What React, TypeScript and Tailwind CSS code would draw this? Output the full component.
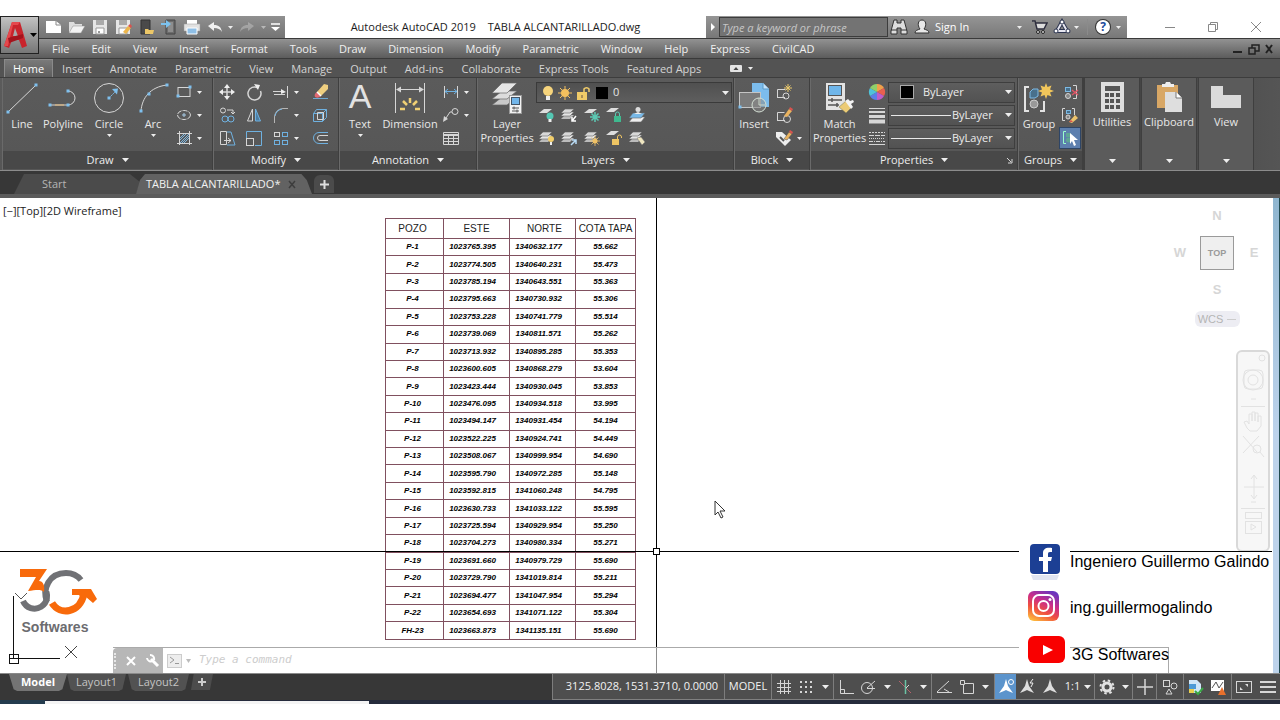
import { useState } from 'react'
import type { ReactNode } from 'react'
import clsx from 'clsx'

interface IconProps {
  w?: number
  h?: number
  children: ReactNode
}

const Icon = ({ w = 18, h = 18, children }: IconProps) => (
  <svg
    width={w}
    height={h}
    viewBox={`0 0 ${w} ${h}`}
    fill="none"
    stroke="#d6d6d6"
    strokeWidth="1"
    className="shrink-0"
    aria-hidden="true"
  >
    {children}
  </svg>
)

const Caret = ({ small = false, className = '' }: { small?: boolean; className?: string }) => (
  <svg
    width={small ? 5 : 7}
    height={small ? 3 : 4}
    viewBox="0 0 8 4"
    preserveAspectRatio="none"
    className={clsx('shrink-0', className)}
    aria-hidden="true"
  >
    <path d="M0 0h8L4 4z" fill="#eee" />
  </svg>
)

/* ---------- quick access icons ---------- */

const Sheets = ({ y = 0 }: { y?: number }) => (
  <g stroke="none" transform={`translate(0 ${y})`}>
    <path d="M5 9h9l-4 4H1z" fill="#bbb" />
    <path d="M5 6h9l-4 4H1z" fill="#e4e4e4" stroke="#666" strokeWidth=".6" />
    <path d="M5 3h9l-4 4H1z" fill="#d8d8d8" stroke="#666" strokeWidth=".6" />
  </g>
)

const quickIcons = [
  {
    label: 'New',
    icon: (
      <Icon>
        <path d="M1 3h10l5 4v8H1z" fill="#fff" stroke="none" />
        <path d="M11 3v4h5" stroke="#888" />
      </Icon>
    ),
  },
  {
    label: 'Open',
    icon: (
      <Icon>
        <path d="M1 15V4h5l1 2h7v2" fill="#ddd" stroke="none" />
        <path d="M1 15L5 8h12l-4 7z" fill="#f3f3f3" stroke="#888" strokeWidth=".5" />
      </Icon>
    ),
  },
  {
    label: 'Save',
    icon: (
      <Icon>
        <path d="M2 2h14v14H2z" fill="#e6e6e6" stroke="none" />
        <path d="M5 2h8v5H5z" fill="#aaa" stroke="none" />
        <path d="M5 10h8v6H5z" fill="#fff" stroke="#999" />
        <path d="M7 14h2" stroke="#333" />
      </Icon>
    ),
  },
  {
    label: 'Save As',
    icon: (
      <Icon>
        <path d="M2 2h14v14H2z" fill="#e6e6e6" stroke="none" />
        <path d="M5 2h8v5H5z" fill="#aaa" stroke="none" />
        <path d="M5 10h8v6H5z" fill="#fff" stroke="#999" />
        <path d="M9 14l5-6 3 2-5 6z" fill="#edb64c" stroke="none" />
        <path d="M14 8l2-2 2 2-1 2z" fill="#d9534f" stroke="none" />
      </Icon>
    ),
  },
  {
    label: 'Open from Web & Mobile',
    icon: (
      <Icon>
        <path d="M4 2h9v14H4z" fill="#4a4a4a" stroke="#333" />
        <path d="M8 16v-5h3l1 1h5l-1 4z" fill="#ecc767" stroke="none" />
      </Icon>
    ),
  },
  {
    label: 'Save to Web & Mobile',
    icon: (
      <Icon>
        <path d="M6 2h9v14H6z" fill="#6d6d6d" stroke="#444" />
        <path d="M8 4h5v10H8z" fill="#8d8d8d" stroke="none" />
        <path d="M1 5h5V2l5 4-5 4V7H1z" fill="#7cc2ee" stroke="none" />
      </Icon>
    ),
  },
  {
    label: 'Plot',
    icon: (
      <Icon>
        <path d="M4 2h10v4H4z" fill="#fff" stroke="none" />
        <path d="M1 6h16v7H1z" fill="#e2e2e2" stroke="#999" strokeWidth=".5" />
        <path d="M4 10h10v6H4z" fill="#8fbfe6" stroke="#fff" />
      </Icon>
    ),
  },
  {
    label: 'Undo',
    icon: (
      <Icon>
        <path d="M2 8l6-4v3c5 0 7 2 8 7-2-3-4-4-8-4v3z" fill="#f0f0f0" stroke="none" />
      </Icon>
    ),
  },
]

/* ---------- ribbon icons ---------- */

const Grip = ({ x, y }: { x: number; y: number }) => (
  <rect x={x - 1.5} y={y - 1.5} width="3" height="3" fill="#7fc0ee" stroke="none" />
)

const lineIcon = (
  <Icon w={32} h={32}>
    <path d="M2 30L30 3" />
    <Grip x={2} y={30} />
    <Grip x={30} y={3} />
  </Icon>
)

const polylineIcon = (
  <Icon w={32} h={32}>
    <path d="M3 23h18a7 7 0 0 0 0-14" />
    <path d="M8 23h9" stroke="#e6b877" />
    <Grip x={3} y={23} />
    <Grip x={21} y={23} />
    <Grip x={21} y={9} />
  </Icon>
)

const circleIcon = (
  <Icon w={32} h={32}>
    <circle cx="16" cy="16" r="14.5" />
    <path d="M16 16l7-7" stroke="#7fc0ee" strokeDasharray="2 1" />
    <path d="M19 7l6-0.500-1 6z" fill="#7fc0ee" stroke="none" />
    <Grip x={16} y={16} />
  </Icon>
)

const arcIcon = (
  <Icon w={32} h={32}>
    <path d="M4 29C5 16 13 5 30 3" />
    <Grip x={4} y={29} />
    <Grip x={12} y={12} />
    <Grip x={30} y={3} />
  </Icon>
)

const textIcon = (
  <span className="flex h-8 w-8 items-start justify-center font-['Liberation_Sans',Arial,sans-serif] text-[34px] leading-[28px] text-[#e2e2e2]">
    A
  </span>
)

const dimensionIcon = (
  <Icon w={32} h={32}>
    <path d="M1.500 1v30M30.500 1v30M3 7.500h26" />
    <path d="M2 7.500l5-3v6zM30 7.500l-5-3v6z" fill="#d6d6d6" stroke="none" />
    <path d="M6 27h5M21 27h5M9 19l4 4M16 16v5M23 19l-4 4" stroke="#efcf74" strokeWidth="2.500" />
  </Icon>
)

const layerPropsIcon = (
  <Icon w={32} h={32}>
    <g stroke="#666" strokeWidth=".7">
      <path d="M11 15h15L16 23H1z" fill="#c9c9c9" />
      <path d="M11 9h15L16 17H1z" fill="#dcdcdc" />
      <path d="M11 1h15L16 11H1z" fill="#e6e6e6" />
    </g>
    <rect x="18.500" y="13.500" width="12" height="18" fill="#f2f2f2" stroke="#999" />
    <rect x="20.500" y="15.500" width="8" height="7" fill="#72b6ea" stroke="#456" />
    <path d="M21 26h7M21 29h7" stroke="#555" />
    <path d="M23 24.500v3M26 27.500v3" stroke="#555" />
  </Icon>
)

const insertIcon = (
  <Icon w={32} h={32}>
    <path d="M14 1h11l6 6v18H14z" fill="#7cbcec" stroke="none" />
    <path d="M25 1v6h6" fill="#c3e2fa" stroke="#5b9bc9" />
    <rect x="1.500" y="10.500" width="21" height="15" fill="#7b7b7b" stroke="#c4c4c4" />
    <circle cx="21" cy="23" r="7" fill="#88888888" stroke="#d5e0d5" />
    <path d="M21 23v-7M21 23h6" stroke="#c9d6c9" />
    <Grip x={2} y={25} />
  </Icon>
)

const matchIcon = (
  <Icon w={32} h={32}>
    <rect x="2" y="1" width="19" height="27" fill="#e3e3e3" stroke="none" />
    <rect x="4.500" y="3.500" width="13" height="10" fill="#6fb6ea" stroke="#555" />
    <path d="M4 18h14M4 23h11M8 16v4M13 21v4" stroke="#555" strokeWidth="1.500" />
    <path d="M15 25l7-6 6 6-6 6z" fill="#eccb76" stroke="#775" strokeWidth=".5" />
    <path d="M21 19l3-2 2 2 3-1 1 2-3 2 2 3-2 2z" fill="#f3f3f3" stroke="none" />
  </Icon>
)

const groupIcon = (
  <Icon w={32} h={32}>
    <path d="M6 5H2v24h4M17 29h4V19" stroke="#e3e3e3" strokeWidth="2" />
    <path d="M7 16v-6l3-3h5v7l-3 2z" fill="#48708c" stroke="#7cb9e4" />
    <circle cx="11" cy="22" r="4" fill="#999" stroke="#ccc" />
    <path
      d="M23 1l1.500 4 4-1.500-1.500 4 4 1.500-4 1.500 1.500 4-4-1.500-1.500 4-1.500-4-4 1.500 1.500-4-4-1.500 4-1.500-1.500-4 4 1.500z"
      fill="#f1c65b"
      stroke="none"
    />
  </Icon>
)

const utilitiesIcon = (
  <Icon w={32} h={32}>
    <rect x="5" y="1" width="23" height="30" fill="#dedede" stroke="none" />
    <rect x="9" y="5" width="15" height="5" fill="#555" stroke="none" />
    <g fill="#555" stroke="none">
      {[12, 18, 24].map((y) =>
        [9, 14, 20].map((x) => <rect key={`${x}-${y}`} x={x} y={y} width="4" height="4" />),
      )}
    </g>
  </Icon>
)

const clipboardIcon = (
  <Icon w={32} h={32}>
    <rect x="4" y="4" width="21" height="23" fill="#d8a765" stroke="none" />
    <path d="M9 6V3h3l1-2h4l1 2h3v3z" fill="#eee" stroke="none" />
    <path d="M12 11h11l6 6v14H12z" fill="#dedede" stroke="none" />
    <path d="M23 11v6h6" fill="#fff" stroke="#777" />
  </Icon>
)

const viewIcon = (
  <Icon w={32} h={32}>
    <path d="M1 5h12v9h18v13H1z" fill="#dadada" stroke="none" />
  </Icon>
)

interface Tool {
  label: string
  icon: ReactNode
  caret?: boolean
}

const drawTools: Tool[] = [
  {
    label: 'Rectangle',
    caret: true,
    icon: (
      <Icon>
        <rect x="3" y="4.500" width="12" height="9" />
        <Grip x={3} y={13} />
        <Grip x={15} y={4} />
      </Icon>
    ),
  },
  {
    label: 'Ellipse',
    caret: true,
    icon: (
      <Icon>
        <ellipse cx="9" cy="9" rx="6.500" ry="4.500" strokeDasharray="5 1" />
        <path d="M7 9h4M9 7v4" stroke="#a8cbe6" />
      </Icon>
    ),
  },
  {
    label: 'Hatch',
    caret: true,
    icon: (
      <Icon>
        <path d="M4.500 2v14M14.500 2v14M2 4.500h15M2 14.500h15" />
        <path d="M5 9l4-4M5 14l9-9M9 14l5-5M5 11l6-6M7 14l7-7" stroke="#7fb6de" />
      </Icon>
    ),
  },
]

const modifyTools: Tool[] = [
  {
    label: 'Move',
    icon: (
      <Icon>
        <path d="M9 3v12M3 9h12" strokeWidth="1.500" />
        <path d="M9 1l3 4H6zM9 17l3-4H6zM1 9l4-3v6zM17 9l-4-3v6z" fill="#eee" stroke="none" />
      </Icon>
    ),
  },
  {
    label: 'Rotate',
    icon: (
      <Icon>
        <path d="M13 5a6.500 6.500 0 1 0 2.500 3" strokeWidth="1.500" />
        <path d="M9 1l6 1-2 5z" fill="#eee" stroke="none" />
      </Icon>
    ),
  },
  {
    label: 'Trim',
    caret: true,
    icon: (
      <Icon>
        <path d="M15.500 3v12M1 8.500h10M2 11.500h11" />
        <path d="M9 6l5 3-5 2z" fill="#eee" stroke="none" />
      </Icon>
    ),
  },
  {
    label: 'Erase',
    icon: (
      <Icon>
        <path d="M2 15.500h15" stroke="#6fa9d3" />
        <path d="M6 9L13 1l4 1v4l-7 7z" fill="#efcf80" stroke="none" />
        <path d="M6 9l4 4c-2 2-4 2-6 1-1-2 0-4 2-5z" fill="#e06a72" stroke="none" />
        <path d="M6 9l4 4" stroke="#fff" strokeWidth="1.500" />
      </Icon>
    ),
  },
  {
    label: 'Copy',
    icon: (
      <Icon>
        <circle cx="5" cy="4.500" r="2.500" />
        <path d="M9 4h6v4M13 6l2 2 2-2" />
        <circle cx="7" cy="13" r="3" stroke="#6fb1e0" />
        <circle cx="13" cy="13" r="3" stroke="#6fb1e0" />
      </Icon>
    ),
  },
  {
    label: 'Mirror',
    icon: (
      <Icon>
        <path d="M7.500 3v12h-5z" />
        <path d="M10.500 3v12h5z" stroke="#6fb1e0" fill="#4d7ea3" />
      </Icon>
    ),
  },
  {
    label: 'Fillet',
    caret: true,
    icon: (
      <Icon>
        <path d="M2.500 17v-6C3 6 6 3 11 2.500h5" stroke="#b5b5b5" />
        <path d="M3 10C4 6 6 4 10 3" stroke="#7cb9e4" />
      </Icon>
    ),
  },
  {
    label: 'Explode',
    icon: (
      <Icon>
        <path d="M2.500 7.500h9v8h-9zM2.500 7.500l3-4h10v8l-4 4M11.500 7.500l4-4" stroke="#6fb1e0" />
        <path d="M6.500 6.500h6v7h-6z" />
      </Icon>
    ),
  },
  {
    label: 'Stretch',
    icon: (
      <Icon>
        <path d="M2.500 2.500h6v13h-6z" />
        <path d="M9 3h4l4 13H9" stroke="#6fb1e0" />
        <path d="M6 11.500h7M10 9l3 2.500-3 2.500" />
      </Icon>
    ),
  },
  {
    label: 'Scale',
    icon: (
      <Icon>
        <path d="M1.500 9V2.500h15v14H10" stroke="#6fb1e0" />
        <rect x="1.500" y="9.500" width="7" height="7" />
      </Icon>
    ),
  },
  {
    label: 'Array',
    caret: true,
    icon: (
      <Icon>
        <rect x="2.500" y="3.500" width="5" height="4" />
        <rect x="10.500" y="3.500" width="5" height="4" stroke="#6fb1e0" />
        <rect x="2.500" y="11.500" width="5" height="4" stroke="#6fb1e0" />
        <rect x="10.500" y="11.500" width="5" height="4" stroke="#6fb1e0" />
      </Icon>
    ),
  },
  {
    label: 'Offset',
    icon: (
      <Icon>
        <path d="M17 3.500H8a5.500 5.500 0 0 0 0 11h9" stroke="#6fb1e0" />
        <path d="M17 6.500H9a2.500 2.500 0 0 0 0 5h8" />
      </Icon>
    ),
  },
]

const annotationTools: Tool[] = [
  {
    label: 'Linear',
    caret: true,
    icon: (
      <Icon>
        <path d="M2.500 3v12M15.500 3v12" />
        <path d="M3 8.500h12M6 6L3 8.500 6 11M12 6l3 2.500L12 11" stroke="#6fb1e0" />
      </Icon>
    ),
  },
  {
    label: 'Leader',
    caret: true,
    icon: (
      <Icon>
        <circle cx="13" cy="5.500" r="3" />
        <path d="M10 6H8L4 12" />
        <path d="M1 16l1-6 4 3z" fill="#d6d6d6" stroke="none" />
      </Icon>
    ),
  },
  {
    label: 'Table',
    icon: (
      <Icon>
        <path d="M1.500 3.500h15v12h-15zM1.500 9.500h15M1.500 12.500h15M6.500 6v10M11.500 6v10" />
        <path d="M2 6h14" strokeWidth="2" />
      </Icon>
    ),
  },
]

const layerTools: Tool[] = [
  {
    label: 'Layer Off',
    icon: (
      <Icon>
        <path d="M6 3h8l-5 4H1z" fill="#ddd" stroke="none" />
        <circle cx="12" cy="10" r="3.500" fill="#54c7b3" stroke="none" />
        <rect x="10.500" y="13" width="3" height="3" fill="#eee" stroke="none" />
      </Icon>
    ),
  },
  {
    label: 'Isolate',
    icon: (
      <Icon>
        <Sheets />
        <path d="M16 10l-4 5M12 11v4h4" stroke="#fff" strokeWidth="1.500" />
      </Icon>
    ),
  },
  {
    label: 'Freeze',
    icon: (
      <Icon>
        <path d="M6 3h8l-5 4H1z" fill="#ddd" stroke="none" />
        <path d="M12 6v10M7 11h10M8.500 7.500l7 7M15.500 7.500l-7 7" stroke="#5cc9b4" strokeWidth="1.500" />
      </Icon>
    ),
  },
  {
    label: 'Lock',
    icon: (
      <Icon>
        <path d="M6 2h8l-5 4H1z" fill="#ddd" stroke="none" />
        <rect x="9" y="10" width="7" height="6" fill="#3fb98f" stroke="none" />
        <path d="M10.500 10V8a2 2 0 0 1 4 0v2" stroke="#5cc9b4" />
      </Icon>
    ),
  },
  {
    label: 'Make Current',
    icon: (
      <Icon>
        <path d="M5 11h12l-4 5H1z" fill="#eee" stroke="#666" strokeWidth=".6" />
        <path d="M5 7h12l-4 5H1z" fill="#78b9e8" stroke="#666" strokeWidth=".6" />
        <circle cx="10" cy="3.500" r="2.500" fill="#ddd" stroke="none" />
        <path d="M6 8l4-2 4 2z" fill="#eee" stroke="none" />
      </Icon>
    ),
  },
  {
    label: 'Turn All On',
    icon: (
      <Icon>
        <Sheets />
        <circle cx="13" cy="10" r="3" fill="#f2cf6c" stroke="none" />
        <rect x="12" y="13" width="2" height="3" fill="#eee" stroke="none" />
      </Icon>
    ),
  },
  {
    label: 'Unisolate',
    icon: (
      <Icon>
        <Sheets />
        <path d="M11 16l5-5M12 11h4v4" stroke="#b9dcf6" strokeWidth="1.500" />
      </Icon>
    ),
  },
  {
    label: 'Thaw',
    icon: (
      <Icon>
        <Sheets />
        <circle cx="12" cy="12" r="2.500" fill="#f0c266" stroke="none" />
        <path d="M12 7v10M7 12h10M8.500 8.500l7 7M15.500 8.500l-7 7" stroke="#f0c266" strokeWidth=".8" />
      </Icon>
    ),
  },
  {
    label: 'Unlock',
    icon: (
      <Icon>
        <path d="M6 2h8l-5 4H1z" fill="#ddd" stroke="none" />
        <rect x="7" y="10" width="7" height="6" fill="#eec463" stroke="none" />
        <path d="M12.500 10V8a2 2 0 0 1 4 0v1" stroke="#eec463" />
      </Icon>
    ),
  },
  {
    label: 'Match Layer',
    icon: (
      <Icon>
        <Sheets />
        <path d="M9 9l4-1 4 5-3 3z" fill="#efe6c0" stroke="#777" strokeWidth=".5" />
      </Icon>
    ),
  },
]

const blockTools: Tool[] = [
  {
    label: 'Create Block',
    icon: (
      <Icon>
        <path d="M2.500 15V6.500h8M2 14.500h8" />
        <circle cx="11" cy="13" r="3" />
        <path d="M13 1v8M9 5h8M10.500 2.500l5 5M15.500 2.500l-5 5" stroke="#eac96c" />
      </Icon>
    ),
  },
  {
    label: 'Edit Block',
    icon: (
      <Icon>
        <path d="M2.500 15V6.500h7M2 14.500h8" />
        <circle cx="12" cy="13" r="3.500" />
        <path d="M9 10l5-7 3 2-5 6z" fill="#eab35f" stroke="none" />
        <path d="M14 3l1-2 3 2-1 2z" fill="#d9534f" stroke="none" />
      </Icon>
    ),
  },
  {
    label: 'Edit Attributes',
    caret: true,
    icon: (
      <Icon>
        <path d="M1 3h6l9 8-6 6-9-9z" fill="#eee" stroke="none" />
        <path d="M5 8l4 4" stroke="#555" strokeWidth="2" />
        <path d="M9 10l5-7 3 2-5 6z" fill="#eab35f" stroke="#555" strokeWidth=".5" />
        <path d="M14 3l1-2 3 2-1 2z" fill="#d9534f" stroke="none" />
      </Icon>
    ),
  },
]

const groupTools: Tool[] = [
  {
    label: 'Ungroup',
    icon: (
      <Icon>
        <path d="M12 2.500h3.500v13H12" />
        <rect x="4.500" y="4.500" width="5" height="4" stroke="#7cb9e4" fill="#48708c" />
        <circle cx="7" cy="13" r="2.500" fill="#888" />
        <path d="M11 7l6 5M17 7l-6 5" stroke="#e05566" strokeWidth="1.500" />
      </Icon>
    ),
  },
  {
    label: 'Group Edit',
    icon: (
      <Icon>
        <path d="M4 2.500H1.500v12H4M11 2.500h2.500V9" />
        <rect x="5.500" y="4.500" width="4" height="3" stroke="#7cb9e4" fill="#48708c" />
        <circle cx="7" cy="11" r="2" fill="#888" />
        <path d="M8 16l6-7 3 3-6 5z" fill="#edc46c" stroke="none" />
        <path d="M8 16l2-2 2 2z" fill="#d9534f" stroke="none" />
      </Icon>
    ),
  },
  {
    label: 'Group Selection',
    icon: (
      <Icon>
        <path d="M5 2.500H2.500v12H5" stroke="#9fc" />
        <rect x="5" y="4" width="5" height="4" fill="#5fa695" stroke="none" />
        <circle cx="7.500" cy="11" r="2.500" fill="#5fa695" stroke="none" />
        <path d="M9 4l8 7h-4l2 5-2 1-2-5-2 3z" fill="#fff" stroke="none" />
      </Icon>
    ),
  },
]

/* ---------- ribbon building blocks ---------- */

const ToolButton = ({ tool, active = false }: { tool: Tool; active?: boolean }) => (
  <button
    type="button"
    aria-label={tool.label}
    className={clsx(
      'flex h-[22px] items-center gap-1 px-[2px]',
      active && 'bg-[#5d7fae] outline outline-1 -outline-offset-1 outline-[#2e4566]',
    )}
  >
    {tool.icon}
    {tool.caret && <Caret small />}
  </button>
)

interface BigButtonProps {
  label: string
  icon: ReactNode
  caret?: boolean
  className?: string
}

const BigButton = ({ label, icon, caret, className }: BigButtonProps) => (
  <button type="button" className={clsx('flex shrink-0 flex-col items-center pt-1', className)}>
    {icon}
    <span className="pt-[3px] text-center leading-[14px] text-[#e8e8e8]">{label}</span>
    {caret && <Caret small className="mt-[3px]" />}
  </button>
)

interface PanelProps {
  title: string
  className?: string
  launcher?: boolean
  children: ReactNode
}

const Panel = ({ title, className, launcher, children }: PanelProps) => (
  <section
    className={clsx('flex shrink-0 flex-col border-l border-r border-l-[#6a6a6a] border-r-[#3f3f3f]', className)}
  >
    <div className="flex h-[73px] items-start">{children}</div>
    <div className="relative flex h-[18px] items-center justify-center bg-[#484848]">
      <button type="button" className="flex items-center gap-2 leading-4 text-[#ececec]">
        {title}
        <Caret />
      </button>
      {launcher && (
        <button type="button" aria-label="Properties dialog" className="absolute right-1">
          <Icon w={7} h={7}>
            <path d="M1 1l4 4M6 2v4H2" />
          </Icon>
        </button>
      )}
    </div>
  </section>
)

const CollapsedPanel = ({ label, icon }: { label: string; icon: ReactNode }) => (
  <button
    type="button"
    className="flex w-14 shrink-0 flex-col items-center border-x border-[#3f3f3f] bg-[#5b5b5b] pt-[3px] pb-[7px]"
  >
    {icon}
    <span className="pt-[2px] leading-[14px] text-[#e8e8e8]">{label}</span>
    <Caret className="mt-auto" />
  </button>
)

const propertyFields = [
  {
    label: 'Object colour',
    icon: (
      <Icon>
        <g stroke="none">
          <path d="M9 9V1a8 8 0 0 1 7 4z" fill="#f0a04b" />
          <path d="M9 9l7-4a8 8 0 0 1 0 8z" fill="#e8604f" />
          <path d="M9 9l7 4a8 8 0 0 1-7 4z" fill="#c05cc9" />
          <path d="M9 9v8a8 8 0 0 1-7-4z" fill="#5b7fe8" />
          <path d="M9 9l-7 4a8 8 0 0 1 0-8z" fill="#4fc3d9" />
          <path d="M9 9L2 5a8 8 0 0 1 7-4z" fill="#8fd06a" />
        </g>
      </Icon>
    ),
  },
  {
    label: 'Lineweight',
    icon: (
      <Icon>
        <path d="M1 2.500h16" />
        <path d="M1 6h16" strokeWidth="2" />
        <path d="M1 10.500h16" strokeWidth="3" />
        <path d="M1 15.500h16" strokeWidth="4" />
      </Icon>
    ),
  },
  {
    label: 'Linetype',
    icon: (
      <Icon>
        <path d="M1 3.500h16" strokeDasharray="2 1" />
        <path d="M1 6.500h16" strokeDasharray="5 1" />
        <path d="M1 9.500h16" strokeDasharray="1 1" />
        <path d="M1 12.500h16" strokeDasharray="4 1 1 1" />
        <path d="M1 15.500h16" />
      </Icon>
    ),
  },
]

const menuItems = [
  'File', 'Edit', 'View', 'Insert', 'Format', 'Tools', 'Draw', 'Dimension',
  'Modify', 'Parametric', 'Window', 'Help', 'Express', 'CivilCAD',
]

const ribbonTabs = [
  'Home', 'Insert', 'Annotate', 'Parametric', 'View', 'Manage', 'Output',
  'Add-ins', 'Collaborate', 'Express Tools', 'Featured Apps',
]

const TitleBar = () => (
  <div className="flex h-[22px] items-stretch bg-white pl-[38px]">
    <div className="flex w-[247px] shrink-0 items-center gap-[5px] bg-gradient-to-b from-[#909090] to-[#747474] pl-[7px]">
      {quickIcons.map((item) => (
        <button key={item.label} type="button" aria-label={item.label}>
          {item.icon}
        </button>
      ))}
      <Caret small className="-ml-px" />
      <button type="button" aria-label="Redo" className="opacity-30">
        <Icon>
          <path d="M16 8l-6-4v3C5 7 3 9 2 14c2-3 4-4 8-4v3z" fill="#f0f0f0" stroke="none" />
        </Icon>
      </button>
      <Caret small className="opacity-50" />
      <button type="button" aria-label="Customize toolbar">
        <Icon w={9} h={8}>
          <path d="M0 1h9" stroke="#fff" strokeWidth="1.500" />
          <path d="M0 4h9L4.500 8z" fill="#fff" stroke="none" />
        </Icon>
      </button>
    </div>
    <h1 className="flex flex-1 items-center justify-center gap-3 text-[#1c1c1c]">
      <span>Autodesk AutoCAD 2019</span>
      <span>TABLA ALCANTARILLADO.dwg</span>
    </h1>
    <div className="flex w-[421px] shrink-0 items-center bg-gradient-to-b from-[#959595] to-[#787878]">
      <span className="flex w-[13px] justify-center">
        <Icon w={4} h={8}>
          <path d="M0 0l4 4-4 4z" fill="#fff" stroke="none" />
        </Icon>
      </span>
      <input
        type="text"
        aria-label="Search help"
        placeholder="Type a keyword or phrase"
        className="h-5 w-[169px] border border-[#3c3c3c] bg-[#737373] px-[2px] italic text-white outline-none placeholder:text-[#c6c6c6]"
      />
      <button type="button" aria-label="Search" className="flex w-[22px] justify-center">
        <Icon>
          <path d="M4 2h3v3h4V2h3l3 11v3h-6v-6H7v6H1v-3z" fill="#ddd" stroke="#333" />
          <path d="M1 12h6M11 12h6" stroke="#333" />
        </Icon>
      </button>
      <button type="button" className="flex items-center gap-1 pl-[3px] text-white">
        <Icon>
          <path d="M2 15c0-3 3-3 5-4C4 7 5 2 9 2s5 5 2 9c2 1 5 1 5 4z" fill="#e8e8e8" stroke="#333" />
        </Icon>
        Sign In
      </button>
      <Caret small className="ml-auto" />
      <button type="button" aria-label="App store" className="ml-2">
        <Icon>
          <path d="M2 3h3l2 8h7l3-6H6" fill="#ddd" stroke="#2d2d3d" strokeWidth="1.500" />
          <circle cx="8" cy="14" r="1.500" fill="#ddd" stroke="#222" />
          <circle cx="13" cy="14" r="1.500" fill="#ddd" stroke="#222" />
        </Icon>
      </button>
      <button type="button" aria-label="Stay connected" className="ml-[5px] flex items-center gap-[3px]">
        <Icon>
          <path d="M9 4l5 9H4z" stroke="#2d3550" strokeWidth="4" />
          <path d="M9 4l5 9H4z" stroke="#e6e6f0" strokeWidth="2" />
          <circle cx="9" cy="4" r="2" fill="#fff" stroke="#2d3550" />
          <circle cx="3" cy="13" r="2" fill="#fff" stroke="#2d3550" />
          <circle cx="15" cy="13" r="2" fill="#fff" stroke="#2d3550" />
        </Icon>
        <Caret small />
      </button>
      <span className="mx-2 h-4 w-px bg-[#8b8b8b]" />
      <button type="button" aria-label="Help" className="flex items-center gap-[6px] pr-[6px]">
        <span className="flex h-[14px] w-[14px] items-center justify-center rounded-full bg-white text-[12px] font-bold text-[#1c4a9c] ring-1 ring-[#333]">
          ?
        </span>
        <Caret small />
      </button>
    </div>
    <div className="flex w-[153px] shrink-0 items-center justify-end gap-[25px] pr-[15px]">
      <button type="button" aria-label="Minimize">
        <Icon>
          <path d="M4 9.500h10" stroke="#888" />
        </Icon>
      </button>
      <button type="button" aria-label="Restore">
        <Icon>
          <path d="M4.500 6.500h7v7h-7zM6.500 6V4.500h7v7H12" stroke="#888" />
        </Icon>
      </button>
      <button type="button" aria-label="Close">
        <Icon>
          <path d="M4 4l10 10M14 4L4 14" stroke="#888" />
        </Icon>
      </button>
    </div>
  </div>
)

const MenuBar = () => (
  <nav className="flex h-[21px] items-center border-y border-[#3a3a3a] bg-gradient-to-b from-[#929292] to-[#5c5c5c] pl-[52px] pr-1">
    <div className="flex flex-1 gap-[22px]">
      {menuItems.map((item) => (
        <a key={item} href="#" className="leading-4 text-[#f0f0f0]">
          {item}
        </a>
      ))}
    </div>
    <div className="flex">
      <button type="button" aria-label="Minimize drawing">
        <Icon w={16} h={14}>
          <path d="M3 10h9" stroke="#222" strokeWidth="2" />
        </Icon>
      </button>
      <button type="button" aria-label="Restore drawing">
        <Icon w={16} h={14}>
          <path d="M3 6h6v6H3zM6 6V3h7v6H9" stroke="#222" strokeWidth="1.500" />
        </Icon>
      </button>
      <button type="button" aria-label="Close drawing">
        <Icon w={14} h={14}>
          <path d="M4 3l6 8M10 3l-6 8" stroke="#222" strokeWidth="2" />
        </Icon>
      </button>
    </div>
  </nav>
)

const RibbonTabs = () => {
  const [active, setActive] = useState('Home')

  return (
    <div className="flex h-[19px] items-stretch border-b border-[#3d3d3d] bg-[#535353] pl-1">
      {ribbonTabs.map((tab) => (
        <button
          key={tab}
          type="button"
          onClick={() => setActive(tab)}
          className={clsx(
            'px-2 leading-4',
            active === tab
              ? 'border-x border-t border-[#8a8a8a] bg-gradient-to-b from-[#7a7a7a] to-[#5d5d5d] text-white'
              : 'border-x border-t border-transparent text-[#d3d3d3]',
          )}
        >
          {tab}
        </button>
      ))}
      <button type="button" aria-label="Ribbon display" className="ml-5 flex items-center gap-[6px]">
        <Icon w={12} h={7}>
          <rect x="0" y="0" width="12" height="7" rx="1" fill="#e3e3e3" stroke="none" />
          <path d="M3.500 5L6 2l2.500 3z" fill="#444" stroke="none" />
        </Icon>
        <Caret small />
      </button>
    </div>
  )
}

const LayerSelect = () => (
  <div className="relative flex h-[21px] w-[196px] items-center border border-[#3a3a3a] bg-gradient-to-b from-[#505050] to-[#5e5e5e]">
    <div className="pointer-events-none absolute left-[2px] flex items-center">
      <Icon>
        <circle cx="9" cy="7" r="5" fill="#f6d47c" stroke="none" />
        <path d="M7 12h4v4H7z" fill="#eee" stroke="none" />
      </Icon>
      <Icon>
        <circle cx="8" cy="9" r="4" fill="#f3c05e" stroke="none" />
        <path d="M8 2v14M1 9h14M3 4l10 10M13 4L3 14" stroke="#f3c05e" />
      </Icon>
      <Icon>
        <rect x="2" y="8" width="10" height="8" fill="#f0cb68" stroke="none" />
        <path d="M9 8V5a3 3 0 0 1 5 0v3" stroke="#f0cb68" strokeWidth="1.500" />
        <path d="M7 11v3" stroke="#654" />
      </Icon>
      <span className="ml-[3px] h-3 w-3 bg-black" />
    </div>
    <select aria-label="Layer" className="h-full w-full appearance-none bg-transparent pl-[76px] text-[#e6e6e6]">
      <option>0</option>
    </select>
    <Caret className="pointer-events-none absolute right-[2px]" />
  </div>
)

const Ribbon = () => (
  <div className="flex h-[93px] items-stretch border-b border-[#8c8c8c] bg-gradient-to-b from-[#5b5b5b] to-[#565656] pl-[2px]">
    <Panel title="Draw" className="w-[211px]">
      <BigButton label="Line" icon={lineIcon} className="w-[38px]" />
      <BigButton label="Polyline" icon={polylineIcon} className="w-[44px]" />
      <BigButton label="Circle" icon={circleIcon} caret className="w-[48px]" />
      <BigButton label="Arc" icon={arcIcon} caret className="w-[40px]" />
      <div className="flex flex-col gap-px pt-[3px]">
        {drawTools.map((tool) => (
          <ToolButton key={tool.label} tool={tool} />
        ))}
      </div>
    </Panel>
    <Panel title="Modify" className="w-[126px]">
      <div className="grid grid-cols-[27px_27px_39px_22px] gap-y-px pt-[3px] pl-[2px]">
        {modifyTools.map((tool) => (
          <ToolButton key={tool.label} tool={tool} />
        ))}
      </div>
    </Panel>
    <Panel title="Annotation" className="w-[138px]">
      <BigButton label="Text" icon={textIcon} caret className="w-10" />
      <BigButton label="Dimension" icon={dimensionIcon} className="w-[60px]" />
      <div className="flex flex-col gap-px pt-[3px]">
        {annotationTools.map((tool) => (
          <ToolButton key={tool.label} tool={tool} />
        ))}
      </div>
    </Panel>
    <Panel title="Layers" className="w-[257px]">
      <BigButton label="Layer Properties" icon={layerPropsIcon} className="w-[58px]" />
      <div className="flex flex-col pt-1">
        <LayerSelect />
        <div className="grid w-[112px] grid-cols-5 gap-y-px pt-px">
          {layerTools.map((tool) => (
            <ToolButton key={tool.label} tool={tool} />
          ))}
        </div>
      </div>
    </Panel>
    <Panel title="Block" className="w-[76px]">
      <BigButton label="Insert" icon={insertIcon} className="w-[38px]" />
      <div className="flex flex-col gap-px pt-[3px]">
        {blockTools.map((tool) => (
          <ToolButton key={tool.label} tool={tool} />
        ))}
      </div>
    </Panel>
    <Panel title="Properties" className="w-[208px]" launcher>
      <BigButton label="Match Properties" icon={matchIcon} className="w-[57px]" />
      <div className="flex flex-1 flex-col gap-px pt-[3px] pr-[2px]">
        {propertyFields.map((field, i) => (
          <div key={field.label} className="flex h-[22px] items-center gap-[2px]">
            {field.icon}
            <div className="relative flex h-[21px] flex-1 items-center border border-[#3e3e3e] bg-gradient-to-b from-[#5e5e5e] to-[#525252]">
              {i === 0 ? (
                <span className="pointer-events-none absolute left-[11px] h-[14px] w-[14px] border border-[#aaa] bg-black" />
              ) : (
                <span className="pointer-events-none absolute left-[2px] h-px w-[60px] bg-[#e8e8e8]" />
              )}
              <select
                aria-label={field.label}
                className={clsx(
                  'h-full w-full appearance-none bg-transparent text-[#ececec]',
                  i === 0 ? 'pl-[34px]' : 'pl-[63px]',
                )}
              >
                <option>ByLayer</option>
              </select>
              <Caret className="pointer-events-none absolute right-[2px]" />
            </div>
          </div>
        ))}
      </div>
    </Panel>
    <Panel title="Groups" className="w-[65px]">
      <BigButton label="Group" icon={groupIcon} className="w-10" />
      <div className="flex flex-col gap-px pt-[3px]">
        {groupTools.map((tool, i) => (
          <ToolButton key={tool.label} tool={tool} active={i === 2} />
        ))}
      </div>
    </Panel>
    <div className="flex flex-1 gap-px bg-gradient-to-r from-[#3f3f3f] to-[#555] pl-px">
      <CollapsedPanel label="Utilities" icon={utilitiesIcon} />
      <CollapsedPanel label="Clipboard" icon={clipboardIcon} />
      <CollapsedPanel label="View" icon={viewIcon} />
    </div>
  </div>
)

const FileTabs = () => (
  <div className="flex h-[27px] items-start border-b-4 border-[#5b5b5b] bg-[#373737] pt-[3px] pl-[14px]">
    <button
      type="button"
      className="h-5 w-[126px] bg-[#4b4b4b] pl-7 text-left text-[#b5b5b5] [clip-path:polygon(0_100%,5px_50%,10px_0,92%_0,100%_40%,97%_100%)]"
    >
      Start
    </button>
    <div className="-ml-1 flex h-5 w-[176px] items-center bg-[#626262] pl-[10px] text-[#f2f2f2] [clip-path:polygon(0_100%,4px_30%,9px_0,94%_0,97%_30%,100%_100%)]">
      <button type="button">TABLA ALCANTARILLADO*</button>
      <button type="button" aria-label="Close tab" className="ml-2">
        <Icon w={9} h={9}>
          <path d="M1 1l6 7M7 1L1 8" stroke="#3d3d3d" strokeWidth="1.500" />
        </Icon>
      </button>
    </div>
    <button
      type="button"
      aria-label="New tab"
      className="mt-px ml-[2px] flex h-[18px] w-5 items-center justify-center rounded-t-md bg-[#4b4b4b]"
    >
      <Icon w={9} h={9}>
        <path d="M4.500 0v9M0 4.500h9" stroke="#ddd" strokeWidth="2" />
      </Icon>
    </button>
  </div>
)

/* ---------- drawing area ---------- */

const manholes = [
  ['P-1', '1023765.395', '1340632.177', '55.662'],
  ['P-2', '1023774.505', '1340640.231', '55.473'],
  ['P-3', '1023785.194', '1340643.551', '55.363'],
  ['P-4', '1023795.663', '1340730.932', '55.306'],
  ['P-5', '1023753.228', '1340741.779', '55.514'],
  ['P-6', '1023739.069', '1340811.571', '55.262'],
  ['P-7', '1023713.932', '1340895.285', '55.353'],
  ['P-8', '1023600.605', '1340868.279', '53.604'],
  ['P-9', '1023423.444', '1340930.045', '53.853'],
  ['P-10', '1023476.095', '1340934.518', '53.995'],
  ['P-11', '1023494.147', '1340931.454', '54.194'],
  ['P-12', '1023522.225', '1340924.741', '54.449'],
  ['P-13', '1023508.067', '1340999.954', '54.690'],
  ['P-14', '1023595.790', '1340972.285', '55.148'],
  ['P-15', '1023592.815', '1341060.248', '54.795'],
  ['P-16', '1023630.733', '1341033.122', '55.595'],
  ['P-17', '1023725.594', '1340929.954', '55.250'],
  ['P-18', '1023704.273', '1340980.334', '55.271'],
  ['P-19', '1023691.660', '1340979.729', '55.690'],
  ['P-20', '1023729.790', '1341019.814', '55.211'],
  ['P-21', '1023694.477', '1341047.954', '55.294'],
  ['P-22', '1023654.693', '1341071.122', '55.304'],
  ['FH-23', '1023663.873', '1341135.151', '55.690'],
]

const ManholeTable = () => (
  <table className="absolute top-5 left-[385px] h-[422px] w-[251px] table-fixed border-collapse font-['Liberation_Sans',Arial,sans-serif] text-black">
    <colgroup>
      <col className="w-[58px]" />
      <col className="w-[66px]" />
      <col className="w-[66px]" />
      <col />
    </colgroup>
    <thead>
      <tr className="h-5 text-[10px] leading-[12px] whitespace-nowrap">
        {['POZO', 'ESTE', 'NORTE', 'COTA TAPA'].map((name) => (
          <th
            key={name}
            className={clsx(
              'border border-[#80505f] p-0 text-center font-normal text-[#222]',
              name === 'POZO' && 'pr-1',
              name === 'NORTE' && 'pl-1',
            )}
          >
            {name}
          </th>
        ))}
      </tr>
    </thead>
    <tbody>
      {manholes.map((row) => (
        <tr key={row[0]} className="text-center text-[8px] leading-[10px] font-bold italic">
          {row.map((cell, i) => (
            <td
              key={i}
              className={clsx('border border-[#80505f] p-0', i === 0 && 'pr-1', (i === 1 || i === 2) && 'pr-2')}
            >
              {cell}
            </td>
          ))}
        </tr>
      ))}
    </tbody>
  </table>
)

const ViewCube = () => (
  <div className="absolute top-[10px] right-[17px] flex w-[90px] flex-col items-center font-['Liberation_Sans',Arial,sans-serif] text-[13px] leading-4 font-bold text-[#d6d6d6]">
    <span>N</span>
    <div className="flex w-full items-center justify-between py-3">
      <span className="w-4 text-center">W</span>
      <button
        type="button"
        className="flex h-[34px] w-[34px] items-center justify-center border border-[#9a9a9a] bg-[#efefef] text-[9px] text-[#9a9a9a]"
      >
        TOP
      </button>
      <span className="w-4 text-center">E</span>
    </div>
    <span>S</span>
    <button
      type="button"
      className="mt-[13px] flex h-4 w-[45px] items-center justify-center gap-1 rounded-md bg-[#ededf3] text-[11px] font-normal text-[#b5b5b5]"
    >
      WCS
      <Icon w={9} h={4}>
        <path d="M0 2.500h9" stroke="#ccc" />
      </Icon>
    </button>
  </div>
)

const NavBar = () => (
  <div className="absolute top-[152px] right-[9px] flex h-[202px] w-[34px] justify-center rounded-md border-2 border-[#d9d9d9] bg-[#f7f7f7]">
    <svg width="28" height="196" viewBox="0 0 28 196" fill="none" stroke="#e2e2e2" aria-hidden="true">
      <circle cx="23" cy="6" r="3" />
      <path d="M2 54.500h24M2 156.500h24" />
      <rect x="5" y="18" width="19" height="19" rx="4" />
      <circle cx="14" cy="28" r="10" />
      <circle cx="14" cy="28" r="5" />
      <path d="M12 47h5M12 150h5" />
      <path d="M8 76L5 70l3-1 2 3v-10h3v7-9h3v9-8h3v9-6h3v10l-4 5H11z" />
      <path d="M4 84l14 16M20 84L4 101" />
      <circle cx="18" cy="97" r="4" />
      <path d="M21 100l4 5M15 124v22M5 135h20M12 127l3-4 3 4M12 143l3 4 3-4" />
      <rect x="6.500" y="160.500" width="16" height="6" />
      <rect x="6.500" y="169.500" width="16" height="12" />
      <path d="M12 172l5 3-5 3z" />
    </svg>
  </div>
)

const CompanyLogo = () => (
  <div className="absolute top-[371px] left-[18px] flex flex-col items-center">
    <svg width="82" height="48" viewBox="0 0 82 48" fill="none" aria-label="3G">
      <path d="M5 32A12.500 12.500 0 1 0 26 19" stroke="#707175" strokeWidth="6" />
      <path d="M28 22C28 8 40 3 48 3c7 0 12 3 15 7" stroke="#fff" strokeWidth="9" />
      <path d="M29 33C24 20 31 4 48 4c7 0 11 2 15 7" stroke="#707175" strokeWidth="6" />
      <path d="M2 0h27l-8 12c4 0 6 4 5 11-3-3-8-2-16-1l8-14H2z" fill="#f86a0b" />
      <path d="M34 34c8 13 28 10 32-9" stroke="#f86a0b" strokeWidth="7" />
      <path d="M54 20h19l6 10-4 4-7-6-4 2-3-4h-7z" fill="#f86a0b" />
    </svg>
    <span className="-ml-2 font-['Liberation_Sans_Narrow','Liberation_Sans',Arial,sans-serif] text-[14px] leading-[20px] font-bold text-[#6c6c70]">
      Softwares
    </span>
  </div>
)

const UcsIcon = () => (
  <svg
    width="82"
    height="82"
    viewBox="0 0 82 82"
    fill="none"
    stroke="#111"
    className="absolute bottom-2 left-0"
    aria-hidden="true"
  >
    <path d="M13.500 10v63M10 72.500h50" transform="translate(0 3)" />
    <rect x="9.500" y="71.500" width="9" height="9" />
    <path d="M65 63l12 12M77 63L65 75" stroke="#444" />
    <path d="M15 13l6 6 6-6" stroke="#555" transform="translate(0 -3)" />
  </svg>
)

const CommandLine = () => (
  <form className="absolute bottom-0 left-[113px] flex h-[26px] w-[1056px] items-stretch border-t border-r border-[#aaa] bg-white/50">
    <div className="flex w-[50px] items-center justify-end gap-[10px] rounded-tl bg-[#b7b7b7] pr-[3px]">
      <span className="mr-auto ml-[2px] h-4 border-l-2 border-dotted border-[#e8e8e8]" />
      <button type="button" aria-label="Close command line">
        <Icon w={10} h={10}>
          <path d="M1 1l8 8M9 1L1 9" stroke="#fff" strokeWidth="2" />
        </Icon>
      </button>
      <button type="button" aria-label="Customize">
        <Icon w={14} h={14}>
          <path d="M5 5l7 7" stroke="#fff" strokeWidth="3" />
          <path d="M1 4a4 4 0 0 0 6 3M4 1a4 4 0 0 1 4 5" stroke="#fff" strokeWidth="2" />
        </Icon>
      </button>
    </div>
    <div className="flex flex-1 items-center bg-white/10 pl-1">
      <span className="flex h-[14px] w-[15px] items-center justify-center border border-[#ccc] bg-[#ededed]">
        <Icon w={11} h={9}>
          <path d="M1 1l4 3-4 3M6 7.500h4" stroke="#999" />
        </Icon>
      </span>
      <svg width="5" height="4" viewBox="0 0 5 4" className="ml-1" aria-hidden="true">
        <path d="M0 0h5L2.500 4z" fill="#bbb" />
      </svg>
      <input
        type="text"
        aria-label="Command"
        placeholder="Type a command"
        className="ml-2 flex-1 bg-transparent font-['DejaVu_Sans_Mono','Liberation_Mono',monospace] text-[11px] italic outline-none placeholder:text-[#cdcdcd]"
      />
    </div>
  </form>
)

const socials = [
  {
    name: 'Ingeniero Guillermo Galindo',
    rowClass: 'h-[46px]',
    iconClass: 'pt-[3px] pl-[10px]',
    textClass: 'pt-[11px]',
    icon: (
      <svg width="32" height="38" viewBox="0 0 32 38" aria-hidden="true">
        <rect x="1" y="0" width="30" height="30" rx="4" fill="#1c3f94" />
        <path d="M14 28V17h-4v-4h4V9c0-4 3-6 9-5v4c-3 0-4 0-4 2v3h4l-1 4h-3v11z" fill="#fff" />
        <path d="M2 31h28l-2 5H4z" fill="#c9d2e8" opacity=".6" />
      </svg>
    ),
  },
  {
    name: 'ing.guillermogalindo',
    rowClass: 'h-[46px]',
    iconClass: 'pt-[3px] pl-[9px]',
    textClass: 'pt-[11px]',
    icon: (
      <svg width="32" height="32" viewBox="0 0 32 32" fill="none" aria-hidden="true">
        <defs>
          <linearGradient id="insta" x1="0.200" y1="1" x2="0.700" y2="0">
            <stop offset="0" stopColor="#fdb93c" />
            <stop offset=".35" stopColor="#f0503f" />
            <stop offset=".65" stopColor="#c92d8a" />
            <stop offset="1" stopColor="#6a36bd" />
          </linearGradient>
        </defs>
        <rect x="0" y="1" width="31" height="30" rx="6" fill="url(#insta)" />
        <rect x="5" y="5" width="21" height="21" rx="6" stroke="#fff" strokeWidth="2" />
        <circle cx="15.500" cy="16" r="5" stroke="#fff" strokeWidth="2" />
        <circle cx="22" cy="9.500" r="1.500" fill="#fff" />
      </svg>
    ),
  },
  {
    name: '3G Softwares',
    rowClass: 'h-10',
    iconClass: 'pt-[3px] pl-[9px]',
    textClass: 'pt-3 pl-[2px]',
    icon: (
      <svg width="38" height="28" viewBox="0 0 38 28" aria-hidden="true">
        <rect x="0" y="0" width="37" height="27" rx="6" fill="#f90000" />
        <path d="M15 9l10 5-10 5z" fill="#fff" />
      </svg>
    ),
  },
]

const SocialLinks = () => (
  <div className="absolute right-[8px] bottom-0 flex w-[252px] flex-col font-['Liberation_Sans',Arial,sans-serif] text-[16px] leading-5 text-black">
    {socials.map((item) => (
      <a key={item.name} href="#" className={clsx('flex', item.rowClass)}>
        <span className={clsx('flex w-[51px] shrink-0 items-start bg-white', item.iconClass)}>{item.icon}</span>
        <span className={clsx('whitespace-nowrap', item.textClass)}>{item.name}</span>
      </a>
    ))}
  </div>
)

const Canvas = () => (
  <main className="relative min-h-[475px] flex-1 overflow-hidden border-r border-[#1f4a50] bg-white">
    <div className="absolute inset-y-0 right-0 w-[6px] bg-gradient-to-b from-[#8fb6d0] via-[#bdd3ec] to-[#bdd3ec]" />
    <p className="absolute top-[5px] left-[3px] font-['Open_Sans','Noto_Sans',sans-serif] text-[11px] leading-4 text-[#222]">
      [−][Top][2D Wireframe]
    </p>
    <ManholeTable />
    <ViewCube />
    <NavBar />
    <CompanyLogo />
    <UcsIcon />

    {/* crosshair */}
    <div className="absolute top-[353px] right-[7px] left-0 h-px bg-black" />
    <div className="absolute inset-y-0 left-[656px] w-px bg-black" />
    <div className="absolute top-[350px] left-[653px] h-[7px] w-[7px] border border-black bg-white" />

    <svg width="13" height="20" viewBox="0 0 13 20" className="absolute top-[302px] left-[714px]" aria-hidden="true">
      <path d="M1 1v14l3-3 3 6 2-1-3-6h5z" fill="#fff" stroke="#333" />
    </svg>

    <CommandLine />
    <SocialLinks />
  </main>
)

/* ---------- status bar ---------- */

interface CellProps {
  label: string
  className: string
  children: ReactNode
}

const Cell = ({ label, className, children }: CellProps) => (
  <button
    type="button"
    aria-label={label}
    className={clsx('flex shrink-0 items-center justify-center border-[#7d7d7d]', className)}
  >
    {children}
  </button>
)

const personPath = 'M9 1l2 7 5 7-5-2-2-1-2 1-5 2 5-7z'

const StatusBar = () => (
  <footer className="flex h-[27px] items-stretch border-t border-[#8a8a8a] bg-[#373737]">
    <div className="flex flex-1 items-start pl-[9px]">
      <button
        type="button"
        className="h-[17px] w-[58px] bg-[#747474] font-bold text-white [clip-path:polygon(0_0,100%_0,92%_90%,86%_100%,14%_100%,8%_90%)]"
      >
        Model
      </button>
      <button
        type="button"
        className="h-[17px] w-[59px] bg-[#525252] text-[#c4c4c4] [clip-path:polygon(0_0,100%_0,94%_90%,88%_100%,12%_100%,6%_90%)]"
      >
        Layout1
      </button>
      <button
        type="button"
        className="ml-[2px] h-[17px] w-[61px] bg-[#525252] text-[#c4c4c4] [clip-path:polygon(0_0,100%_0,94%_90%,88%_100%,12%_100%,6%_90%)]"
      >
        Layout2
      </button>
      <button
        type="button"
        aria-label="New layout"
        className="ml-[2px] flex h-[16px] w-[22px] items-center justify-center bg-[#4c4c4c] [clip-path:polygon(12%_0,100%_0,86%_100%,0_100%)]"
      >
        <Icon w={8} h={8}>
          <path d="M4 0v8M0 4h8" stroke="#ccc" strokeWidth="2" />
        </Icon>
      </button>
    </div>
    <div className="flex shrink-0 items-stretch border-b border-[#808080] bg-[#4e4e4e] text-[#f2f2f2]">
      <output className="flex w-[172px] items-center justify-end border-l border-[#7d7d7d] pr-[6px]">
        3125.8028, 1531.3710, 0.0000
      </output>
      <Cell label="Model space" className="w-[47px] border-l">MODEL</Cell>
      <Cell label="Grid" className="w-6 border-l">
        <Icon>
          <path d="M5.500 2v14M9.500 2v14M13.500 2v14M2 5.500h14M2 9.500h14M2 13.500h14" />
        </Icon>
      </Cell>
      <Cell label="Snap" className="w-[22px]">
        <Icon>
          <path d="M3 4h12M3 9h12M3 14h12" strokeWidth="2" strokeDasharray="2 3" />
        </Icon>
      </Cell>
      <Cell label="Snap options" className="w-[16px]"><Caret /></Cell>
      <Cell label="Ortho" className="w-[24px] border-l">
        <Icon>
          <path d="M3.500 2v13.500H17M3.500 11.500h4v4" />
        </Icon>
      </Cell>
      <Cell label="Polar" className="w-[22px]">
        <Icon>
          <circle cx="8" cy="10" r="5.500" />
          <path d="M8 10l8-7M8 10.500h8" />
        </Icon>
      </Cell>
      <Cell label="Polar options" className="w-4"><Caret /></Cell>
      <Cell label="Isometric" className="w-5">
        <Icon>
          <path d="M3 3l12 12" stroke="#b5616b" />
          <path d="M9.500 2v14" stroke="#6bc3a4" strokeWidth="1.500" />
          <path d="M10 10l3-3" />
        </Icon>
      </Cell>
      <Cell label="Isometric options" className="w-4"><Caret /></Cell>
      <Cell label="Object snap tracking" className="w-6 border-l">
        <Icon>
          <path d="M2 14.500h15M2 14L14 3M9 11l5 3" />
        </Icon>
      </Cell>
      <Cell label="Object snap" className="w-[23px]">
        <Icon>
          <path d="M5.500 5.500h10v10h-10z" />
          <path d="M2.500 2.500h4v4h-4z" fill="#4e4e4e" />
        </Icon>
      </Cell>
      <Cell label="Object snap options" className="w-[14px]"><Caret /></Cell>
      <Cell label="Annotation visibility" className="ml-[2px] w-[22px] border-l border-[#5c94cc] bg-[#5c94cc]">
        <Icon>
          <path d={personPath} fill="#fff" stroke="none" />
          <circle cx="14" cy="4" r="2.500" stroke="#fff" />
        </Icon>
      </Cell>
      <Cell label="Auto scale" className="w-[22px]">
        <Icon>
          <path d={personPath} fill="#ddd" stroke="none" />
          <path d="M15 1l-3 4h3l-2 4" stroke="#eee" />
        </Icon>
      </Cell>
      <Cell label="Annotation scale icon" className="w-6">
        <Icon>
          <path d={personPath} fill="#ddd" stroke="none" />
        </Icon>
      </Cell>
      <Cell label="Annotation scale" className="w-[32px] gap-1">
        1:1
        <Caret />
      </Cell>
      <Cell label="Workspace" className="w-6 border-l">
        <Icon>
          <circle cx="9" cy="9" r="4" stroke="#e2e2e2" strokeWidth="3" />
          <circle cx="9" cy="9" r="6.500" stroke="#e2e2e2" strokeWidth="2" strokeDasharray="2.500 2.600" />
        </Icon>
      </Cell>
      <Cell label="Workspace options" className="w-[14px]"><Caret /></Cell>
      <Cell label="Annotation monitor" className="w-6 border-l">
        <Icon>
          <path d="M9 1v16M1 9h16" strokeWidth="1.500" />
        </Icon>
      </Cell>
      <Cell label="Isolate objects" className="w-[27px] border-l">
        <Icon>
          <rect x="2.500" y="2.500" width="6" height="6" />
          <circle cx="13" cy="8" r="3" />
          <path d="M8 11l3 5H5z" />
        </Icon>
      </Cell>
      <Cell label="Hardware acceleration" className="w-[22px] border-l">
        <Icon>
          <path d="M3 2h8l4 4v9H3z" fill="#cfe6f8" stroke="none" />
          <path d="M3 6h7v5H3z" fill="#4c9ad6" stroke="none" />
          <path d="M3 11h5v4H3z" fill="#e8d04e" stroke="none" />
          <path d="M9 13l3 3 5-6" stroke="#39a845" strokeWidth="2" />
        </Icon>
      </Cell>
      <Cell label="Performance" className="w-[26px]">
        <Icon>
          <rect x="2" y="2" width="13" height="11" fill="#fff" stroke="none" />
          <path d="M3 10l4-6 3 6 4-6" stroke="#555" />
          <path d="M13 9l4 8H9z" fill="#e8702c" stroke="none" />
        </Icon>
      </Cell>
      <Cell label="Clean screen" className="w-[25px] border-l">
        <Icon>
          <rect x="1.500" y="3.500" width="15" height="11" />
          <path d="M5 12h3M5 12V9l3 3zM13 6h-3M13 6v3l-3-3z" fill="#ddd" stroke="none" />
        </Icon>
      </Cell>
      <Cell label="Customization" className="w-6">
        <Icon>
          <path d="M1 4h16M1 9h16M1 14h16" strokeWidth="2" />
        </Icon>
      </Cell>
    </div>
  </footer>
)

const App = () => (
  <div className="flex min-h-screen flex-col bg-white py-4 font-['Open_Sans','Noto_Sans',sans-serif] text-[11px]">
    <header className="relative">
      <TitleBar />
      <MenuBar />
      <button
        type="button"
        aria-label="Application menu"
        className="absolute top-0 left-0 flex h-[38px] w-[39px] items-center gap-px border border-[#222] bg-gradient-to-b from-[#c2c2c2] to-[#777] pl-[2px]"
      >
        <svg width="26" height="30" viewBox="0 0 26 30" aria-hidden="true">
          <path d="M9 2h8l7 24-5 2-3-8H9l-3 8-5-2z" fill="#c9242c" />
          <path d="M12 8l3 8h-5z" fill="#a9a9a9" />
          <path d="M9 2h8l-2 3h-5L5 26l-4 0z" fill="#e5484d" />
          <path d="M5 18l15-4v4l-14 5z" fill="#a3141d" />
        </svg>
        <Caret className="brightness-0" />
      </button>
    </header>
    <RibbonTabs />
    <Ribbon />
    <FileTabs />
    <Canvas />
    <StatusBar />
    <div className="flex h-1 bg-[#252b3c]">
      <span className="w-[45px] bg-[#243c4e]" />
      <span className="mt-px w-[324px] bg-[#f4f4f4]" />
    </div>
  </div>
)

export default App
